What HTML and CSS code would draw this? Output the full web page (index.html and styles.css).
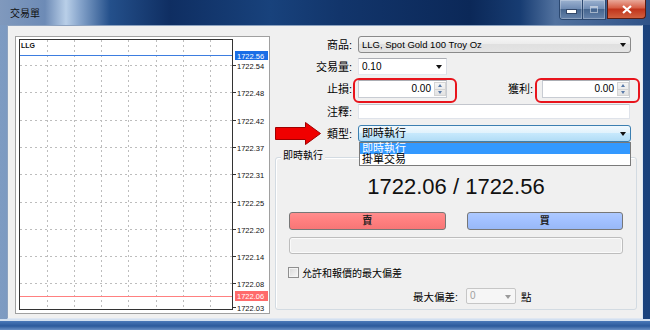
FILE: index.html
```html
<!DOCTYPE html>
<html>
<head>
	<meta charset="utf-8">
	<title>交易單</title>
	<link rel="stylesheet" href="styles.css">
</head>
<body>
<div class="window">
	<div class="titlebar">
		<span class="title">交易單</span>
		<div class="caption">
			<span class="cap-group">
				<span class="cap-btn cap-min"><i></i></span>
				<span class="cap-btn cap-max"><i></i></span>
			</span>
			<span class="cap-close">
				<svg width="10" height="9" viewBox="0 0 10 9"><path d="M1 1L9 8M9 1L1 8" stroke="#fff" stroke-width="2.2"/></svg>
			</span>
		</div>
	</div>

	<div class="frame">
		<div class="client">

			<div class="chart-panel">
				<svg width="253" height="276" viewBox="0 0 253 276">
					<g transform="translate(-16,-37)">
						<path class="grid" d="M20 65.5H232M20 92.5H232M20 120.5H232M20 147.5H232M20 174.5H232M20 202.5H232M20 229.5H232M20 256.5H232M20 283.5H232"/>
						<path class="grid" d="M47.5 40V309M74.5 40V309M101.5 40V309M128.5 40V309M156.5 40V309M183.5 40V309M210.5 40V309"/>
						<rect x="19.5" y="39.5" width="213" height="270" fill="none" stroke="#333"/>
						<path class="ticks" d="M233 65.5h3M233 92.5h3M233 120.5h3M233 147.5h3M233 174.5h3M233 202.5h3M233 229.5h3M233 256.5h3M233 283.5h3M233 307.5h3"/>
						<line x1="20" y1="55.5" x2="232" y2="55.5" stroke="#3d7de0"/>
						<line x1="20" y1="296.5" x2="232" y2="296.5" stroke="#ff8080"/>
						<text class="sym" x="21" y="48">LLG</text>
						<rect x="235" y="51" width="33" height="9" fill="#1a6ee6"/>
						<text class="axis ask" x="237" y="58.5">1722.56</text>
						<text class="axis" x="237" y="68.5">1722.54</text>
						<text class="axis" x="237" y="95.5">1722.48</text>
						<text class="axis" x="237" y="123.5">1722.42</text>
						<text class="axis" x="237" y="150.5">1722.37</text>
						<text class="axis" x="237" y="177.5">1722.31</text>
						<text class="axis" x="237" y="205.5">1722.25</text>
						<text class="axis" x="237" y="232.5">1722.20</text>
						<text class="axis" x="237" y="259.5">1722.14</text>
						<text class="axis" x="237" y="286.5">1722.08</text>
						<rect x="235" y="291" width="33" height="10" fill="#ff6a6a"/>
						<text class="axis bid" x="237" y="299">1722.06</text>
						<text class="axis" x="237" y="310.5">1722.03</text>
					</g>
				</svg>
			</div>

			<div class="order">
				<div class="row row-symbol">
					<span class="label">商品:</span>
					<div class="combo combo-symbol">LLG, Spot Gold 100 Troy Oz</div>
				</div>
				<div class="row row-volume">
					<span class="label">交易量:</span>
					<div class="combo combo-volume">0.10</div>
				</div>
				<div class="row row-stops">
					<span class="label">止損:</span>
					<div class="num hl">
						<span class="val">0.00</span>
						<span class="spin"><i class="up"></i><i class="down"></i></span>
					</div>
					<span class="label label-tp">獲利:</span>
					<div class="num num-tp hl hl-tp">
						<span class="val">0.00</span>
						<span class="spin"><i class="up"></i><i class="down"></i></span>
					</div>
				</div>
				<div class="row row-memo">
					<span class="label">注釋:</span>
					<div class="memo"></div>
				</div>
				<div class="row row-type">
					<span class="label label-type">
						<svg class="arrow" width="46" height="23" viewBox="0 0 46 23"><path d="M0.5 5.5H30.5V0.5L45.5 11.5L30.5 22.5V17.5H0.5Z" fill="#f00000" stroke="#a00000"/></svg>
						<span>類型:</span>
					</span>
					<div class="combo combo-type">即時執行
						<div class="droplist">
							<div class="item selected">即時執行</div>
							<div class="item">掛單交易</div>
						</div>
					</div>
				</div>

				<div class="group">
					<span class="group-title">即時執行</span>
					<div class="price">1722.06 / 1722.56</div>
					<div class="trade">
						<div class="btn btn-sell">賣</div>
						<div class="btn btn-buy">買</div>
					</div>
					<div class="progress"></div>
					<div class="check-row">
						<span class="checkbox"></span>
						<span>允許和報價的最大偏差</span>
					</div>
					<div class="dev-row">
						<span>最大偏差:</span>
						<div class="combo combo-dev">0</div>
						<span>點</span>
					</div>
				</div>
			</div>

		</div>
	</div>
	<div class="frame-bottom"></div>
</div>
</body>
</html>
```

FILE: styles.css
```css
body {
	margin:0;
	font-family:"Liberation Sans", "Noto Sans CJK TC", sans-serif;
	font-size:11px;
	color:#000;
	background:#fff;
}

.window {
	width:650px;
	height:330px;
	display:flex;
	flex-direction:column;
	overflow:hidden;
	background:linear-gradient(90deg, #7e9bc2, #5f80ae 20%, #2a5290 70%, #1b427c);
}

/* title bar */
.titlebar {
	height:25px;
	flex:none;
	display:flex;
	justify-content:space-between;
	align-items:flex-start;
	padding-right:4px;
	background:linear-gradient(90deg, #8099bd 0, #6d8bb6 45px, #b9cfe8 66px, #86a4cb 80px, #24508b 110px, #0f2e62 170px, #18427c 270px, #12356b 340px, #0b2858 470px, #173c72 520px, #52729f 555px, #2f5288 650px);
}
.title {
	margin:8px 0 0 10px;
	font-size:10px;
	line-height:12px;
	color:#111;
}
.caption {
	display:flex;
	gap:1px;
}
.cap-group {
	display:flex;
	border:1px solid #2b4870;
	border-top:0;
	border-radius:0 0 0 4px;
	overflow:hidden;
}
.cap-btn {
	width:22px;
	height:19px;
	display:flex;
	align-items:center;
	justify-content:center;
	background:linear-gradient(#9cb2d0, #6c89b2 50%, #46668f 50%, #6683ab);
	box-shadow:inset 0 0 0 1px rgba(255,255,255,0.25);
}
.cap-max {
	border-left:1px solid #2b4870;
}
.cap-min i {
	display:block;
	width:9px;
	height:3px;
	margin-top:4px;
	background:#fff;
	border:1px solid #33486a;
}
.cap-max i {
	display:block;
	width:6px;
	height:4px;
	border:1px solid rgba(255,255,255,0.6);
	border-top-width:2px;
	opacity:0.8;
}
.cap-close {
	width:39px;
	height:19px;
	display:flex;
	align-items:center;
	justify-content:center;
	border:1px solid #5a1c12;
	border-top:0;
	border-radius:0 0 4px 0;
	box-sizing:border-box;
	background:linear-gradient(#e9a899, #d65c43 45%, #c0331b 50%, #d1603f);
}

/* window frame */
.frame {
	flex:1;
	display:flex;
	padding:0 7px;
}
.frame-bottom {
	height:11px;
	flex:none;
	background:linear-gradient(#d3e0f0 0, #d3e0f0 2px, #4a78b8 2px, #2c5a9c 7px, #6a8fc4 11px);
}
.client {
	flex:1;
	display:flex;
	gap:5px;
	padding:10px 5px 0 7px;
	background:#f0f0f0;
	border:1px solid #8da2bf;
	border-bottom-color:#dfe7f2;
	border-right-color:#dfe7f2;
}

/* chart */
.chart-panel {
	width:255px;
	height:278px;
	flex:none;
	box-sizing:border-box;
	border:1px solid #a0a0a0;
	background:#fff;
}
.chart-panel svg {
	display:block;
}
.grid {
	fill:none;
	stroke:#bdbdbd;
	stroke-dasharray:2 3;
}
.ticks {
	stroke:#333;
}
.axis {
	font-family:"Liberation Sans", sans-serif;
	font-size:7.5px;
	fill:#111;
}
.axis.ask, .axis.bid {
	fill:#fff;
}
.sym {
	font-family:"Liberation Sans", sans-serif;
	font-size:7px;
	font-weight:bold;
	fill:#111;
}

/* order form */
.order {
	width:362px;
	flex:none;
}
.row {
	display:flex;
	align-items:center;
}
.row-symbol { height:17px; }
.row-volume { height:17px; margin-top:5px; }
.row-stops { height:18px; margin-top:5px; }
.row-memo { height:15px; margin-top:6px; }
.row-type { height:17px; margin-top:6px; }

.label {
	width:77px;
	flex:none;
	margin-right:6px;
	text-align:right;
	white-space:nowrap;
	line-height:14px;
}
.label-tp {
	width:86px;
	margin-right:9px;
}
.label-type {
	display:flex;
	justify-content:space-between;
	align-items:center;
}
.arrow {
	display:block;
	margin:-3px 0;
}

.combo {
	position:relative;
	box-sizing:border-box;
	height:17px;
	border:1px solid #8a8a8a;
	border-radius:3px;
	padding-left:3px;
	font-size:9.5px;
	line-height:15px;
	white-space:nowrap;
	background:linear-gradient(#f6f6f6, #ececec 50%, #e0e0e0 50%, #e4e4e4);
}
.combo::after {
	content:"";
	position:absolute;
	right:4px;
	top:6px;
	border-left:3px solid transparent;
	border-right:3px solid transparent;
	border-top:4px solid #111;
}
.combo-symbol {
	width:273px;
}
.combo-volume {
	width:89px;
	font-size:10px;
	border-radius:0;
	border-color:#abadb3 #dbdfe6 #e3e9ef #e2e3ea;
	background:#fff;
}
.combo-type {
	width:273px;
	font-size:11px;
	border-color:#3c7fb1;
	background:linear-gradient(#f1f9fe, #e1f2fc 45%, #c6e8fc 50%, #b1dcf6);
}
.droplist {
	position:absolute;
	left:0;
	top:16px;
	width:272px;
	box-sizing:border-box;
	border:1px solid #7a7a7a;
	background:#fff;
	z-index:2;
}
.droplist .item {
	height:11px;
	line-height:11px;
	padding-left:2px;
	font-size:11px;
}
.droplist .selected {
	background:#3399ff;
	color:#fff;
}

.num {
	width:89px;
	height:18px;
	flex:none;
	box-sizing:border-box;
	display:flex;
	border:1px solid #c8ccd3;
	border-top-color:#abadb3;
	background:#fff;
}
.num-tp {
	width:88px;
}
.num .val {
	flex:1;
	text-align:right;
	padding-right:3px;
	font-size:10px;
	line-height:16px;
}
.spin {
	width:12px;
	margin:1px 0 1px 0;
	box-sizing:border-box;
	display:flex;
	flex-direction:column;
	border:1px solid #d4d4d4;
	background:linear-gradient(#f5f5f5, #e3e3e3);
}
.spin i {
	flex:1;
	display:flex;
	align-items:center;
	justify-content:center;
}
.spin i::before {
	content:"";
	border-left:2px solid transparent;
	border-right:2px solid transparent;
}
.spin .up::before {
	border-bottom:3px solid #5a7aa8;
}
.spin .down {
	border-top:1px solid #d4d4d4;
}
.spin .down::before {
	border-top:3px solid #5a7aa8;
}

.hl {
	position:relative;
}
.hl::after {
	content:"";
	position:absolute;
	left:-6px;
	right:-11px;
	top:-3px;
	bottom:-6px;
	border:2px solid #e8141c;
	border-radius:6px;
}
.hl-tp::after {
	left:-8px;
}

.memo {
	width:272px;
	height:15px;
	box-sizing:border-box;
	border:1px solid #dfe3ea;
	border-top-color:#c3c6cd;
	background:#fff;
}

/* execution group */
.group {
	margin-top:15px;
	border:1px solid #d3dbe2;
	border-radius:3px;
	padding-bottom:5px;
	box-shadow:inset 1px 1px 0 #fff;
}
.group-title {
	display:block;
	width:max-content;
	margin:-9px 0 0 5px;
	padding:0 2px;
	background:#f0f0f0;
	font-size:10px;
	line-height:14px;
}
.price {
	margin-top:10px;
	font-size:22px;
	line-height:28px;
	text-align:center;
	color:#111;
}
.trade {
	display:grid;
	grid-template-columns:1fr 1fr;
	column-gap:21px;
	margin:11px 13px 0;
}
.btn {
	height:18px;
	box-sizing:border-box;
	border:1px solid #777;
	border-radius:3px;
	text-align:center;
	font-size:10px;
	font-weight:bold;
	line-height:16px;
	color:#222;
}
.btn-sell {
	background:linear-gradient(#ff8d8d, #ff7f7f 50%, #f77676);
}
.btn-buy {
	background:linear-gradient(#adc9ff, #a1c0ff 50%, #98b8f7);
}
.progress {
	height:17px;
	margin:7px 13px 0;
	box-sizing:border-box;
	border:1px solid #bdbdbd;
	border-radius:3px;
	background:#efefef;
	box-shadow:inset 0 0 0 1px #fafafa;
}
.check-row {
	height:13px;
	margin:12px 12px 0;
	display:flex;
	align-items:center;
	gap:3px;
	font-size:10px;
}
.checkbox {
	width:11px;
	height:11px;
	box-sizing:border-box;
	border:1px solid #8f8f8f;
	background:linear-gradient(135deg, #d8d8d8, #f8f8f8);
	box-shadow:inset 0 0 0 1px #f4f4f4;
}
.dev-row {
	height:16px;
	margin:9px 0 0 137px;
	display:flex;
	align-items:center;
	font-size:10.5px;
}
.combo-dev {
	width:50px;
	height:16px;
	margin:0 5px 0 8px;
	font-size:10px;
	line-height:14px;
	color:#a0a0a0;
	border-radius:2px;
	border-color:#c6c6c6;
	background:#f6f6f6;
}
.combo-dev::after {
	border-top-color:#9a9a9a;
	top:6px;
}
```
